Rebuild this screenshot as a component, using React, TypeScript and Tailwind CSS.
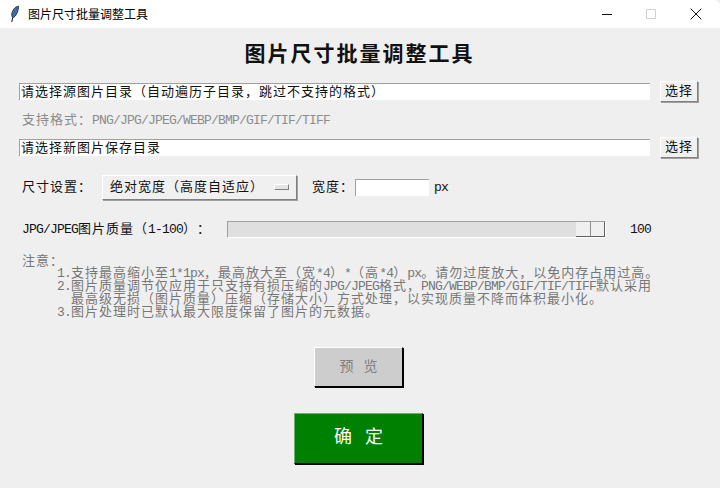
const cjk = "font-['Liberation_Mono','Noto_Sans_CJK_SC',monospace]";

function T({ s }: { s: string }) {
  const parts = s.split(/([\x21-\x7e]+)/).filter(Boolean);
  return (
    <>
      {parts.map((p, i) =>
        /^[\x21-\x7e]+$/.test(p) ? (
          <span key={i} className="inline-block text-[13px] tracking-[-0.8px]">{p}</span>
        ) : (
          <span key={i} className="inline-block text-[13px] tracking-[1px] [text-spacing-trim:space-all]">{p}</span>
        )
      )}
    </>
  );
}

function Raised({ children, className = "" }: { children?: React.ReactNode; className?: string }) {
  return (
    <div className={`flex items-center border border-t-white border-l-white border-r-[#808080] border-b-[#808080] shadow-[1px_1px_0_#a0a0a0] ${className}`}>
      {children}
    </div>
  );
}

function Entry({ text }: { text: string }) {
  return (
    <div className="h-[17px] w-[631px] shrink-0 border-t border-l border-t-[#a0a0a0] border-l-[#a0a0a0] bg-white pl-px leading-[16px] text-[#111] whitespace-nowrap overflow-hidden">
      <T s={text} />
    </div>
  );
}

function Choose() {
  return (
    <Raised className="ml-[10px] h-[21px] w-[38px] shrink-0 justify-center bg-[#f0f0f0] text-[#111]">
      <T s="选择" />
    </Raised>
  );
}

export default function App() {
  return (
    <div className={`flex h-[488px] w-[720px] flex-col overflow-hidden bg-[#efefef] ${cjk}`}>
      <div className="flex h-[28px] shrink-0 items-center rounded-tr-[6px] bg-white">
        <svg className="ml-[10px] h-[18px] w-[10px]" viewBox="0 0 10 18">
          <path d="M8.5 1.2C5 1.5 2.4 5 1.8 9c-.2 1.5.2 3 1 3.6C6 12 8.5 6 8.5 1.2Z" fill="#3f6fa8" stroke="#1b1b2b" strokeWidth="0.8" />
          <path d="M2.6 12.5 1.8 17" stroke="#111" strokeWidth="1" />
        </svg>
        <span className="ml-[8px] font-['Noto_Sans_CJK_SC',sans-serif] text-[12px] text-black">图片尺寸批量调整工具</span>
        <div className="ml-auto flex h-full items-center">
          <svg className="h-[12px] w-[12px]" viewBox="0 0 12 12"><path d="M1 6.5h10" stroke="#111" strokeWidth="1" /></svg>
          <div className="ml-[33px] h-[10px] w-[10px] rounded-[1px] border border-[#cfcfcf]" />
          <svg className="ml-[34px] mr-[18px] h-[12px] w-[12px]" viewBox="0 0 12 12"><path d="M.7.7l10.6 10.6M11.3.7.7 11.3" stroke="#111" strokeWidth="1" /></svg>
        </div>
      </div>

      <div className="flex flex-1 flex-col pl-[19px]">
        <div className="mt-[9px] w-[681px] text-center font-['Noto_Sans_CJK_SC',sans-serif] text-[21px] leading-[30px] font-bold tracking-[2px] text-[#111]">图片尺寸批量调整工具</div>

        <div className="mt-[16px] flex h-[17px] items-center">
          <Entry text="请选择源图片目录（自动遍历子目录，跳过不支持的格式）" />
          <Choose />
        </div>
        <div className="mt-[12px] ml-[3px] h-[16px] leading-[16px] text-[#8c8c8c]"><T s="支持格式：PNG/JPG/JPEG/WEBP/BMP/GIF/TIF/TIFF" /></div>
        <div className="mt-[11px] flex h-[17px] items-center">
          <Entry text="请选择新图片保存目录" />
          <Choose />
        </div>

        <div className="mt-[18px] flex h-[26px] items-center pl-[3px] text-[#111]">
          <span className="w-[80px]"><T s="尺寸设置：" /></span>
          <Raised className="h-[25px] w-[195px] justify-between bg-[#f0f0f0] pr-[7px] pl-[7px]">
            <span><T s="绝对宽度（高度自适应）" /></span>
            <span className="h-[6px] w-[15px] border border-t-white border-l-white border-r-[#808080] border-b-[#808080] bg-[#e4e4e4]" />
          </Raised>
          <span className="ml-[15px] w-[43px]"><T s="宽度：" /></span>
          <div className="h-[17px] w-[74px] border-t border-l border-t-[#a0a0a0] border-l-[#a0a0a0] bg-white" />
          <span className="ml-[5px]"><T s="px" /></span>
        </div>

        <div className="mt-[20px] flex h-[18px] items-center pl-[3px] text-[#111]">
          <span className="w-[205px] whitespace-nowrap"><T s="JPG/JPEG图片质量（1-100）：" /></span>
          <div className="flex h-[17px] w-[379px] justify-end border-t border-l border-t-[#a0a0a0] border-l-[#a0a0a0] border-r border-b border-r-white border-b-white bg-[#dfdfdf]">
            <div className="flex h-[15px] w-[29px]">
              <div className="w-[15px] border-r border-b border-r-[#909090] border-b-[#606060] bg-[#f0f0f0]" />
              <div className="w-[14px] border-r border-b border-r-[#606060] border-b-[#606060] bg-[#f0f0f0]" />
            </div>
          </div>
          <span className="ml-[24px]"><T s="100" /></span>
        </div>

        <div className="mt-[17px] pl-[3px] leading-[13px] text-[#777] whitespace-nowrap">
          <div className="h-[12px]"><T s="注意：" /></div>
          <div className="h-[13px] pl-[35px]"><T s="1.支持最高缩小至1*1px，最高放大至（宽*4）*（高*4）px。请勿过度放大，以免内存占用过高。" /></div>
          <div className="h-[13px] pl-[35px]"><T s="2.图片质量调节仅应用于只支持有损压缩的JPG/JPEG格式，PNG/WEBP/BMP/GIF/TIF/TIFF默认采用" /></div>
          <div className="h-[13px] pl-[49px]"><T s="最高级无损（图片质量）压缩（存储大小）方式处理，以实现质量不降而体积最小化。" /></div>
          <div className="h-[13px] pl-[35px]"><T s="3.图片处理时已默认最大限度保留了图片的元数据。" /></div>
        </div>

        <div className="mt-[28px] flex w-[679px] flex-col items-center">
          <div className="flex h-[40px] w-[89px] items-center justify-center gap-[10px] border border-t-white border-l-white border-r-black border-b-black bg-[#cdcdcd] text-[14px] text-[#808080] shadow-[1px_1px_0_#000]"><span>预</span><span>览</span></div>
          <div className="mt-[26px] flex h-[51px] w-[129px] items-center justify-center gap-[13px] border border-t-[#6fb06f] border-l-[#6fb06f] border-r-black border-b-black bg-[#008000] text-[18px] text-white shadow-[1px_1px_0_#000]"><span>确</span><span>定</span></div>
        </div>
      </div>
    </div>
  );
}
